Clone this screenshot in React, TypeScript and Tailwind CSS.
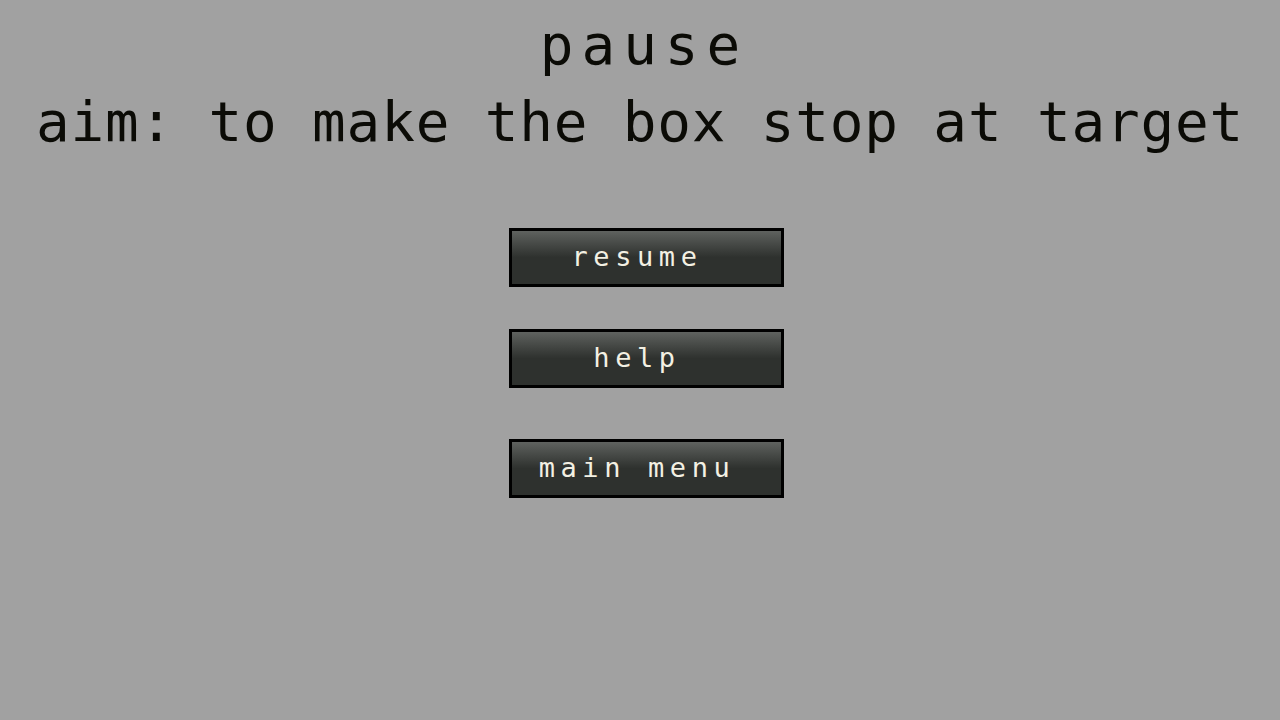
import React from 'react';

const buttons = [
  { label: 'resume', mt: 'mt-[74px]' },
  { label: 'help', mt: 'mt-[42px]' },
  { label: 'main menu', mt: 'mt-[51px]' },
];

const App: React.FC = () => {
  return (
    <div
      className="w-[1280px] h-[720px] bg-[#a1a1a1] flex flex-col items-center"
      style={{ fontFamily: '"DejaVu Sans Mono", "Liberation Mono", monospace' }}
    >
      <h1 className="mt-[13px] text-[56px] leading-[64px] tracking-[8px] pl-[8px] text-[#0b0b06] font-normal">
        pause
      </h1>
      <h2 className="mt-[13px] text-[56px] leading-[64px] tracking-[0.8px] text-[#0b0b06] font-normal">
        aim: to make the box stop at target
      </h2>

      {buttons.map((b) => (
        <button
          key={b.label}
          className={`${b.mt} ml-[13px] w-[275px] h-[59px] border-[3px] border-black bg-gradient-to-b from-[#5f625f] to-[#2e312e] to-50% flex items-center justify-center pr-[19px] pb-[1px] text-[27px] tracking-[5.6px] text-[#f3f0e3]`}
        >
          {b.label}
        </button>
      ))}
    </div>
  );
};

export default App;
